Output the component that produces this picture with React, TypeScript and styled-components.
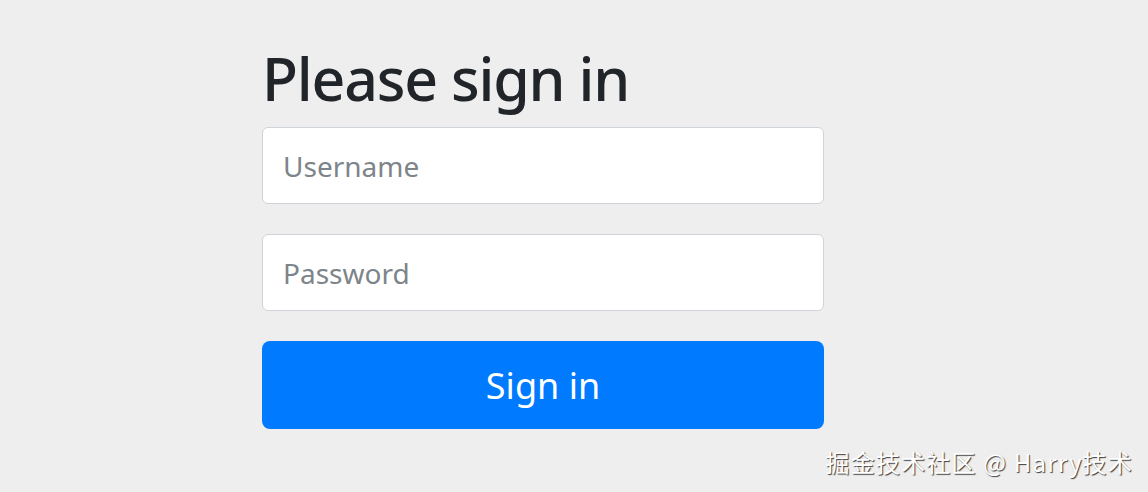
import React from "react";
import styled, { createGlobalStyle } from "styled-components";

const Global = createGlobalStyle`
  html, body { margin: 0; padding: 0; background: #eeeeee; }
  body { font-family: "Noto Sans", "Open Sans", sans-serif; }
  * { box-sizing: border-box; }
`;

const Page = styled.div`
  position: relative;
  width: 1148px;
  height: 492px;
  overflow: hidden;
  background: #eeeeee;
`;

const Form = styled.form`
  display: flex;
  flex-direction: column;
  width: 562px;
  margin-left: 262px;
  padding-top: 42px;
`;

const Heading = styled.h2`
  margin: 0 0 13px 0;
  font-family: "Noto Sans", sans-serif;
  font-weight: 500;
  font-size: 59px;
  line-height: 72px;
  color: #212529;
  letter-spacing: -1.2px;
`;

const Input = styled.input<{ $gap?: number }>`
  display: block;
  width: 100%;
  height: 77px;
  margin-bottom: ${(p) => p.$gap ?? 0}px;
  padding: 0 20px;
  font-family: "Noto Sans", sans-serif;
  font-size: 28px;
  color: #495057;
  background: #ffffff;
  border: 1px solid #ced4da;
  border-radius: 6px;
  outline: none;
  &::placeholder { color: #7d848a; }
`;

const Button = styled.button`
  display: block;
  width: 100%;
  height: 88px;
  margin-top: 30px;
  font-family: "Noto Sans", sans-serif;
  font-size: 36px;
  color: #ffffff;
  background: #007bff;
  border: none;
  border-radius: 8px;
  cursor: pointer;
`;

const Watermark = styled.div`
  position: absolute;
  right: 15px;
  bottom: 16px;
  font-family: "Noto Sans CJK SC", "Noto Sans", sans-serif;
  font-size: 24px;
  line-height: 28px;
  letter-spacing: 1.2px;
  color: #ffffff;
  text-shadow: 1px 1px 1px rgba(0, 0, 0, 0.75);
`;

export default function App() {
  return (
    <Page>
      <Global />
      <Form onSubmit={(e) => e.preventDefault()}>
        <Heading>Please sign in</Heading>
        <Input placeholder="Username" $gap={30} />
        <Input placeholder="Password" type="password" />
        <Button type="submit">Sign in</Button>
      </Form>
      <Watermark>掘金技术社区 @ Harry技术</Watermark>
    </Page>
  );
}
